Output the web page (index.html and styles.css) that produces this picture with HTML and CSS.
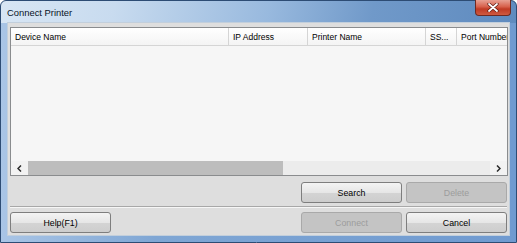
FILE: index.html
```html
<!DOCTYPE html>
<html>
<head>
<meta charset="utf-8">
<link rel="stylesheet" href="styles.css">
</head>
<body>
<div class="window">
  <div class="titlebar">
    <span class="title">Connect Printer</span>
    <div class="close">
      <svg width="12" height="9" viewBox="0 0 12 9"><path d="M2 1 L10 8 M10 1 L2 8" stroke="#5a1a12" stroke-width="3.2" stroke-linecap="round"/><path d="M2 1 L10 8 M10 1 L2 8" stroke="#ffffff" stroke-width="1.8" stroke-linecap="round"/></svg>
    </div>
  </div>
  <div class="client">
    <div class="list">
      <div class="header">
        <div class="col c1">Device Name</div>
        <div class="col c2">IP Address</div>
        <div class="col c3">Printer Name</div>
        <div class="col c4">SS...</div>
        <div class="col c5">Port Number</div>
      </div>
      <div class="rows"></div>
      <div class="hscroll">
        <div class="sbtn"><svg width="5" height="7" viewBox="0 0 5 7"><path d="M4 0.5 L1 3.5 L4 6.5" fill="none" stroke="#2a2a2a" stroke-width="1.5"/></svg></div>
        <div class="thumb"></div>
        <div class="track"></div>
        <div class="sbtn"><svg width="5" height="7" viewBox="0 0 5 7"><path d="M1 0.5 L4 3.5 L1 6.5" fill="none" stroke="#2a2a2a" stroke-width="1.5"/></svg></div>
      </div>
    </div>
    <div class="btnrow first">
      <button class="btn">Search</button>
      <button class="btn disabled">Delete</button>
    </div>
    <div class="sep"></div>
    <div class="btnrow">
      <button class="btn">Help(F1)</button>
      <span class="spacer"></span>
      <button class="btn disabled">Connect</button>
      <button class="btn">Cancel</button>
    </div>
  </div>
</div>
</body>
</html>
```
FILE: styles.css
```css
html, body {
  margin: 0;
  padding: 0;
  background: #ffffff;
}
.window {
  width: 517px;
  height: 243px;
  box-sizing: border-box;
  border: 1px solid #2d4c74;
  border-radius: 6px 6px 0 0;
  background:
    linear-gradient(100deg, #d8e6f4 0%, #c8dbef 22%, #98b9de 52%, #7099c9 72%, #5f8bbf 100%) no-repeat 0 0 / 100% 22px,
    linear-gradient(90deg, #a9c5e6 0%, #7fa6d4 30%, #6f9ad0 100%);
  display: flex;
  flex-direction: column;
  padding: 0 6px 6px 6px;
  font-family: "Liberation Sans", Arial, sans-serif;
  color: #000000;
}
.titlebar {
  height: 21px;
  display: flex;
  align-items: flex-start;
}
.title {
  font-size: 9.4px;
  margin-top: 6px;
  color: #08131f;
}
.close {
  margin-left: auto;
  margin-right: -1px;
  margin-top: -1px;
  width: 36px;
  height: 16px;
  box-sizing: border-box;
  border: 1px solid #6e2a22;
  border-top: none;
  border-radius: 0 0 4px 4px;
  background: linear-gradient(#e8a093 0%, #d7604b 45%, #c03a24 60%, #cf5a40 100%);
  display: flex;
  align-items: center;
  justify-content: center;
}
.client {
  flex: 1;
  background: #dedede;
  display: flex;
  flex-direction: column;
  padding: 5px 2px 3px 3px;
  box-shadow: inset 0 0 0 1px #c2cfdc;
}
.list {
  height: 149px;
  box-sizing: border-box;
  border: 1px solid #8a8c8e;
  background: #f6f6f6;
  display: flex;
  flex-direction: column;
  font-size: 8.5px;
}
.header {
  height: 18px;
  box-sizing: border-box;
  display: flex;
  background: linear-gradient(#ffffff, #f4f4f4);
  border-bottom: 1px solid #d5d5d5;
}
.col {
  box-sizing: border-box;
  border-right: 1px solid #d5d5d5;
  padding-left: 4px;
  display: flex;
  align-items: center;
  white-space: nowrap;
  overflow: hidden;
}
.c1 { width: 218px; }
.c2 { width: 79px; }
.c3 { width: 118px; }
.c4 { width: 31px; }
.c5 { flex: 1; border-right: none; }
.rows {
  flex: 1;
}
.hscroll {
  height: 14px;
  display: flex;
  background: #ebebeb;
}
.sbtn {
  width: 17px;
  display: flex;
  align-items: center;
  justify-content: center;
  background: #f2f2f2;
}
.thumb {
  width: 255px;
  background: #bdbdbd;
}
.track {
  flex: 1;
  background: #ececec;
}
.btnrow {
  display: flex;
  justify-content: flex-end;
  gap: 4px;
  padding-right: 1px;
  height: 21px;
}
.btnrow.first {
  margin-top: 6px;
}
.spacer {
  flex: 1;
}
.btn {
  width: 101px;
  height: 21px;
  box-sizing: border-box;
  border: 1px solid #7e7e7e;
  border-radius: 3px;
  background: linear-gradient(#f4f4f4 0%, #e6e6e6 50%, #d4d4d4 51%, #cdcdcd 100%);
  font-family: "Liberation Sans", Arial, sans-serif;
  font-size: 8.8px;
  color: #000000;
  padding: 0;
  margin: 0;
}
.btn.disabled {
  background: #c4c4c4;
  border-color: #a9a9a9;
  color: #9c9c9c;
}
.sep {
  height: 1px;
  margin-top: 3px;
  margin-bottom: 4px;
  margin-right: 1px;
  background: #a8a8a8;
  border-bottom: 1px solid #f6f6f6;
}
```
